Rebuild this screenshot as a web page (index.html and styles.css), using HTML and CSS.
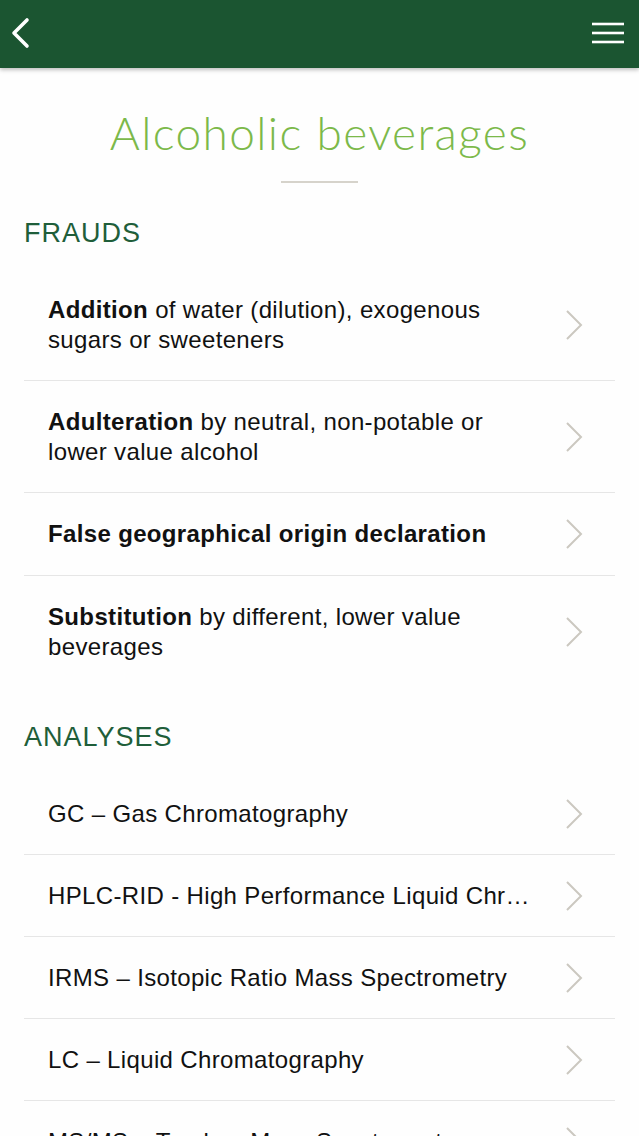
FILE: index.html
```html
<!DOCTYPE html>
<html lang="en">
<head>
<meta charset="utf-8">
<title>Alcoholic beverages</title>
<link rel="stylesheet" href="styles.css">
</head>
<body>
<header class="topbar">
  <button class="icon-btn back" aria-label="Back">
    <svg width="22" height="32" viewBox="0 0 22 32"><polyline points="17,3 4,16 17,29" fill="none" stroke="#fff" stroke-width="3.6" stroke-linecap="round" stroke-linejoin="round"/></svg>
  </button>
  <button class="icon-btn menu" aria-label="Menu">
    <svg width="32" height="22" viewBox="0 0 32 22"><g stroke="#fff" stroke-width="2.6"><line x1="0" y1="2" x2="32" y2="2"/><line x1="0" y1="11" x2="32" y2="11"/><line x1="0" y1="20" x2="32" y2="20"/></g></svg>
  </button>
</header>

<main class="content">
  <h1 class="title">Alcoholic beverages</h1>
  <div class="rule"></div>

  <section class="section">
    <h2 class="section-title">FRAUDS</h2>
    <ul class="list">
      <li class="item"><span class="text"><b>Addition</b> of water (dilution), exogenous sugars or sweeteners</span><svg class="chev" width="18" height="30" viewBox="0 0 18 30"><polyline points="2,1 16,15 2,29"/></svg></li>
      <li class="item"><span class="text"><b>Adulteration</b> by neutral, non-potable or lower value alcohol</span><svg class="chev" width="18" height="30" viewBox="0 0 18 30"><polyline points="2,1 16,15 2,29"/></svg></li>
      <li class="item single"><span class="text"><b>False geographical origin declaration</b></span><svg class="chev" width="18" height="30" viewBox="0 0 18 30"><polyline points="2,1 16,15 2,29"/></svg></li>
      <li class="item"><span class="text"><b>Substitution</b> by different, lower value beverages</span><svg class="chev" width="18" height="30" viewBox="0 0 18 30"><polyline points="2,1 16,15 2,29"/></svg></li>
    </ul>
  </section>

  <section class="section">
    <h2 class="section-title">ANALYSES</h2>
    <ul class="list">
      <li class="item"><span class="text one">GC – Gas Chromatography</span><svg class="chev" width="18" height="30" viewBox="0 0 18 30"><polyline points="2,1 16,15 2,29"/></svg></li>
      <li class="item"><span class="text one">HPLC-RID - High Performance Liquid Chromatography with Refractive Index Detection</span><svg class="chev" width="18" height="30" viewBox="0 0 18 30"><polyline points="2,1 16,15 2,29"/></svg></li>
      <li class="item"><span class="text one">IRMS – Isotopic Ratio Mass Spectrometry</span><svg class="chev" width="18" height="30" viewBox="0 0 18 30"><polyline points="2,1 16,15 2,29"/></svg></li>
      <li class="item"><span class="text one">LC – Liquid Chromatography</span><svg class="chev" width="18" height="30" viewBox="0 0 18 30"><polyline points="2,1 16,15 2,29"/></svg></li>
      <li class="item"><span class="text one">MS/MS – Tandem Mass Spectrometry</span><svg class="chev" width="18" height="30" viewBox="0 0 18 30"><polyline points="2,1 16,15 2,29"/></svg></li>
    </ul>
  </section>
</main>
</body>
</html>
```

FILE: styles.css
```css
* { box-sizing: border-box; }
html, body { margin: 0; padding: 0; }
body {
  background: #fefefe;
  font-family: "Liberation Sans", Arial, sans-serif;
  color: #111;
  overflow: hidden;
}
.topbar {
  height: 68px;
  background: #1b5531;
  display: flex;
  align-items: center;
  justify-content: space-between;
  padding: 0 15px 0 10px;
  box-shadow: 0 2px 4px rgba(0,0,0,0.25);
  position: relative;
  z-index: 1;
}
.icon-btn {
  background: none;
  border: 0;
  padding: 0;
  display: flex;
}
.back { margin-top: -2px; }
.menu { margin-top: -2px; }
.content { padding: 0 24px; }
.title {
  margin: 39px 0 0;
  text-align: center;
  font-family: Lato, "Open Sans", sans-serif;
  font-weight: 300;
  font-size: 46px;
  line-height: 52px;
  color: #7cb94a;
  letter-spacing: 1.4px;
}
.rule {
  width: 77px;
  height: 2px;
  background: #d6d3cb;
  margin: 22px auto 0;
}
.section { margin-top: 34px; }
.section + .section { margin-top: 34px; }
.section-title {
  margin: 0 0 20px;
  font-weight: 400;
  font-size: 27px;
  line-height: 32px;
  letter-spacing: 1px;
  color: #1f5e3a;
}
.list { list-style: none; margin: 0; padding: 0; }
.item {
  display: flex;
  align-items: center;
  padding: 26px 32px 25px 24px;
  border-bottom: 1px solid #e6e6e6;
}
.item.single { padding-bottom: 26px; }
.item:last-child { border-bottom: 0; }
.text {
  flex: 1;
  min-width: 0;
  font-size: 24px;
  line-height: 30px;
  letter-spacing: 0.35px;
  padding-right: 30px;
}
.text b { font-weight: 700; }
.text.one {
  white-space: nowrap;
  overflow: hidden;
  text-overflow: ellipsis;
}
.chev {
  flex: none;
  fill: none;
  stroke: #cbc8c0;
  stroke-width: 2;
}
```
